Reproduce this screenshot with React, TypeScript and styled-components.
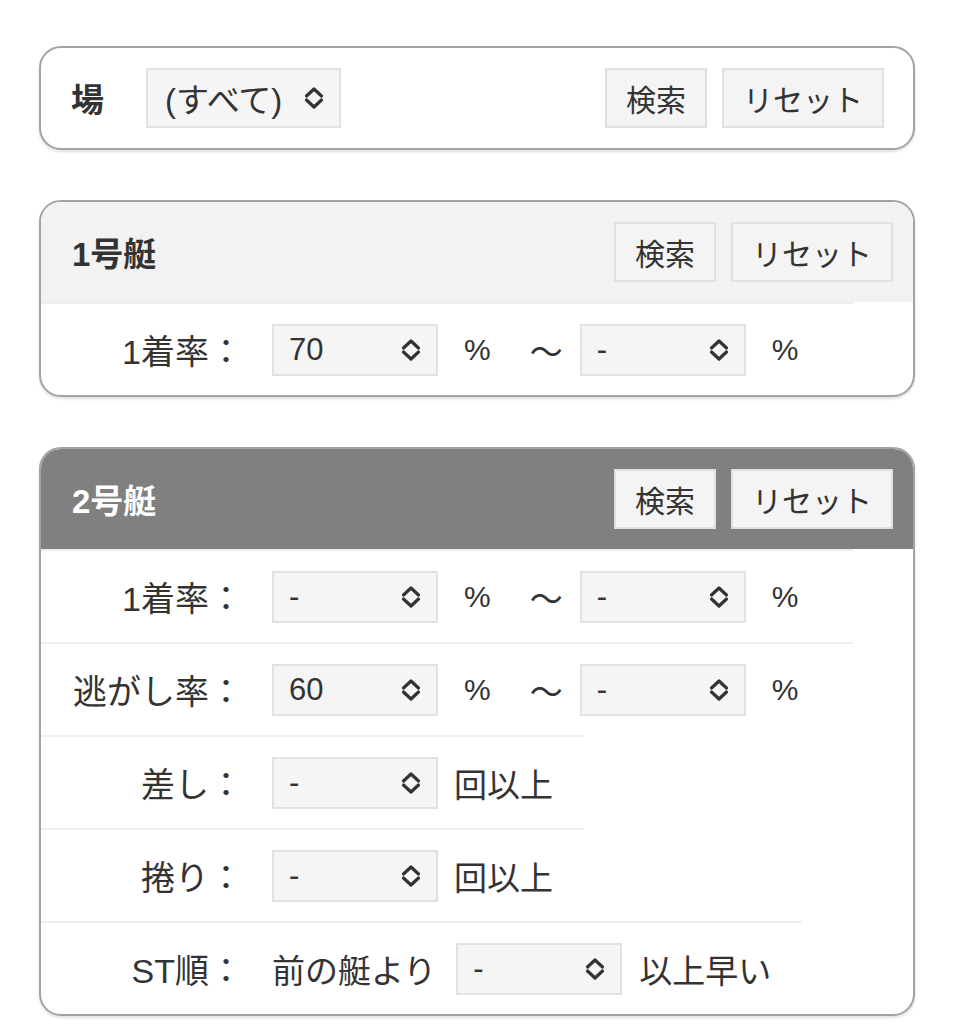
import React from 'react';
import styled, {createGlobalStyle} from 'styled-components';

const GlobalStyle = createGlobalStyle`
  body {
    margin: 0;
    background: #fff;
    font-family: "Liberation Sans", "Noto Sans CJK JP", sans-serif;
    color: #333;
  }
`;

const Chevron = () => (
    <ChevronSvg viewBox="0 0 20 24" width="20" height="24">
        <path d="M2.5 10 L10 3 L17.5 10" />
        <path d="M2.5 14 L10 21 L17.5 14" />
    </ChevronSvg>
);

interface ISelectProps {
    value: string;
    fit?: boolean;
}

const Select = ({value, fit}: ISelectProps) => (
    <SelectBox $fit={fit}>
        <span>{value}</span>
        <Chevron/>
    </SelectBox>
);

const Actions = () => (
    <ButtonGroup>
        <Button>検索</Button>
        <Button>リセット</Button>
    </ButtonGroup>
);

const PercentRange = ({label, from, to}: {label: string; from: string; to: string}) => (
    <Row>
        <Label>{label}</Label>
        <Select value={from}/>
        <Pct>%</Pct>
        <Tilde>〜</Tilde>
        <Select value={to}/>
        <Pct $last>%</Pct>
    </Row>
);

const CountRow = ({label}: {label: string}) => (
    <Row>
        <Label>{label}</Label>
        <Select value="-"/>
        <Suffix $gap={16}>回以上</Suffix>
    </Row>
);

const App = () => {
    return <Page>
        <GlobalStyle/>

        <Card>
            <TopBar>
                <Title>場</Title>
                <Select value="(すべて)" fit/>
                <Actions/>
            </TopBar>
        </Card>

        <Card>
            <Header>
                <Title>1号艇</Title>
                <Actions/>
            </Header>
            <PercentRange label="1着率：" from="70" to="-"/>
        </Card>

        <Card>
            <Header $dark>
                <Title $light>2号艇</Title>
                <Actions/>
            </Header>
            <PercentRange label="1着率：" from="-" to="-"/>
            <PercentRange label="逃がし率：" from="60" to="-"/>
            <CountRow label="差し："/>
            <CountRow label="捲り："/>
            <Row>
                <Label>ST順：</Label>
                <Suffix $gap={0}>前の艇より</Suffix>
                <Suffix $gap={20}><Select value="-"/></Suffix>
                <Suffix $gap={17}>以上早い</Suffix>
            </Row>
        </Card>
    </Page>;
};

export default App;



const Page = styled.div`
  padding: 46px 0 40px 39px;
  display: flex;
  flex-direction: column;
  gap: 50px;
`;

const Card = styled.div`
  width: 876px;
  box-sizing: border-box;
  border: 2px solid #a3a3a3;
  border-radius: 22px;
  overflow: hidden;
  background: #fff;
  box-shadow: 0 2px 3px rgba(0, 0, 0, 0.12);
`;

const TopBar = styled.div`
  display: flex;
  align-items: center;
  height: 100px;
  padding: 0 29px 0 30px;
  box-sizing: border-box;
  gap: 42px;
`;

const Header = styled.div<{$dark?: boolean}>`
  display: flex;
  align-items: center;
  justify-content: space-between;
  height: 100px;
  padding: 0 20px 0 31px;
  box-sizing: border-box;
  background: ${p => p.$dark ? '#808080' : '#f2f2f2'};
`;

const Title = styled.div<{$light?: boolean}>`
  font-size: 33px;
  font-weight: 700;
  color: ${p => p.$light ? '#fff' : '#333'};
`;

const ButtonGroup = styled.div`
  display: flex;
  gap: 15px;
  margin-left: auto;
`;

const Button = styled.button`
  height: 60px;
  padding: 0 19px;
  font-family: inherit;
  font-size: 30px;
  color: #333;
  background: #f4f4f4;
  border: 2px solid #e0e0e0;
  border-radius: 0;
`;

const SelectBox = styled.div<{$fit?: boolean}>`
  display: flex;
  align-items: center;
  justify-content: space-between;
  gap: 22px;
  box-sizing: border-box;
  width: ${p => p.$fit ? 'auto' : '166px'};
  height: ${p => p.$fit ? '60px' : '52px'};
  padding: 0 15px 0 ${p => p.$fit ? '17px' : '15px'};
  font-size: ${p => p.$fit ? '33px' : '31px'};
  color: #333;
  background: #f5f5f5;
  border: 2px solid #e2e2e2;
`;

const ChevronSvg = styled.svg`
  flex: none;
  fill: none;
  stroke: #333;
  stroke-width: 3.2;
  stroke-linecap: round;
  stroke-linejoin: round;
`;

const Row = styled.div`
  display: flex;
  align-items: center;
  width: fit-content;
  height: 93px;
  box-sizing: border-box;
  padding-right: 31px;
  border-top: 2px solid #eeeeee;
  font-size: 33px;
`;

const Label = styled.div`
  width: 202px;
  margin-right: 29px;
  font-size: 34px;
  text-align: right;
  white-space: nowrap;
`;

const Pct = styled.span<{$last?: boolean}>`
  margin-left: 26px;
  margin-right: ${p => p.$last ? '24px' : '0'};
  font-size: 30px;
`;

const Tilde = styled.span`
  margin: 0 17px 0 39px;
`;

const Suffix = styled.span<{$gap: number}>`
  margin-left: ${p => p.$gap}px;
  white-space: nowrap;
`;
